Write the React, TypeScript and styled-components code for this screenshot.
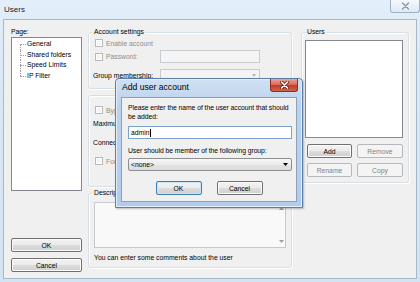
import React from "react";
import styled, { createGlobalStyle } from "styled-components";

const Global = createGlobalStyle`
  html, body { margin: 0; padding: 0; background: #dce9f6; }
  body {
    width: 420px; height: 282px; overflow: hidden;
    font-family: "Liberation Sans", Arial, sans-serif;
    font-size: 6.8px; color: #000;
  }
  * { box-sizing: border-box; }
`;

const Window = styled.div`
  position: relative;
  width: 420px;
  height: 282px;
  display: flex;
  flex-direction: column;
  padding: 0 3px 3px 3px;
  background: linear-gradient(to bottom, #e2effa 0%, #d8e8f6 30%, #d3e3f3 100%);
`;

const TitleBar = styled.div`
  height: 19px;
  display: flex;
  align-items: flex-start;
  justify-content: space-between;
`;

const WindowTitle = styled.div`
  font-size: 8px;
  line-height: 8px;
  margin: 6px 0 0 1px;
  color: #1a1a1a;
`;

const WinClose = styled.div`
  width: 30px;
  height: 13px;
  margin-right: -3px;
  border: 1px solid #9fb0c4;
  border-top: none;
  border-radius: 0 0 3px 3px;
  background: linear-gradient(#f3f8fd, #dde9f5);
  display: flex;
  align-items: center;
  justify-content: center;
`;

const Client = styled.div`
  flex: 1;
  display: flex;
  border: 1px solid #a9b8c9;
  background: #f0f0f0;
  padding: 0 7px;
`;

const LeftPane = styled.div`
  width: 71px;
  display: flex;
  flex-direction: column;
  padding: 7px 0 6px 0;
  margin-right: 6px;
`;

const Label = styled.div`
  line-height: 9px;
  height: 9px;
  white-space: nowrap;
`;

const Tree = styled.div`
  margin-top: 1px;
  height: 154px;
  background: #fff;
  border: 1px solid #828790;
  padding: 1px 0 0 8px;
`;

const TreeItem = styled.div`
  display: flex;
  height: 10.5px;
  align-items: stretch;
  white-space: nowrap;
`;

const Branch = styled.span<{ $first?: boolean; $last?: boolean }>`
  position: relative;
  width: 6px;
  flex: none;
  &::before {
    content: "";
    position: absolute;
    left: 0;
    top: ${(p) => (p.$first ? "50%" : "0")};
    bottom: ${(p) => (p.$last ? "50%" : "0")};
    border-left: 1px dotted #a0a0a0;
  }
  &::after {
    content: "";
    position: absolute;
    left: 0;
    right: 0;
    top: 50%;
    border-top: 1px dotted #a0a0a0;
  }
`;

const TreeText = styled.span`
  line-height: 10.5px;
  padding-left: 1px;
`;

const Btn = styled.div<{ $disabled?: boolean; $default?: boolean }>`
  height: 14px;
  display: flex;
  align-items: center;
  justify-content: center;
  border-radius: 2px;
  border: 1px solid
    ${(p) => (p.$disabled ? "#b5b9bc" : p.$default ? "#3c7fb1" : "#707070")};
  background: ${(p) =>
    p.$disabled
      ? "#f4f4f4"
      : "linear-gradient(#f2f2f2 0%, #ebebeb 50%, #dddddd 51%, #cfcfcf 100%)"};
  box-shadow: ${(p) =>
    p.$default ? "inset 0 0 0 1px #cbe7f7" : p.$disabled ? "none" : "inset 0 0 0 1px #fbfbfb"};
  color: ${(p) => (p.$disabled ? "#838383" : "#000")};
  line-height: 9px;
`;

const LeftButtons = styled.div`
  margin-top: auto;
  display: flex;
  flex-direction: column;
  gap: 6px;
`;

const MiddlePane = styled.div`
  width: 204px;
  display: flex;
  flex-direction: column;
  padding-top: 12px;
  gap: 6px;
  margin-right: 9px;
`;

const RightPane = styled.div`
  width: 108px;
  padding-top: 12px;
`;

const Group = styled.div<{ $h: number }>`
  height: ${(p) => p.$h}px;
  border: 1px solid #d5dfe5;
  border-radius: 3px;
  box-shadow: inset 1px 1px 0 #fff, 1px 1px 0 #fff;
  display: flex;
  flex-direction: column;
`;

const Legend = styled.div`
  align-self: flex-start;
  margin: -6px 0 0 4px;
  padding: 0 1px;
  background: #f0f0f0;
  line-height: 9px;
  height: 9px;
  white-space: nowrap;
`;

const Row = styled.div<{ $mt: number; $h?: number }>`
  display: flex;
  align-items: center;
  margin-top: ${(p) => p.$mt}px;
  height: ${(p) => p.$h ?? 12}px;
  padding-left: 4px;
  white-space: nowrap;
`;

const FieldLabel = styled.div<{ $disabled?: boolean; $w?: number }>`
  width: ${(p) => (p.$w ? `${p.$w}px` : "auto")};
  flex: none;
  color: ${(p) => (p.$disabled ? "#8d8d8d" : "#000")};
  line-height: 9px;
`;

const CheckBox = styled.span<{ $disabled?: boolean }>`
  width: 8px;
  height: 8px;
  flex: none;
  margin: 0 3px 0 2px;
  border: 1px solid ${(p) => (p.$disabled ? "#b9b9b9" : "#8f8f8f")};
  background: ${(p) => (p.$disabled ? "#f4f4f4" : "linear-gradient(#dcdcdc, #fff)")};
  box-shadow: inset 0 0 0 1px #fff;
`;

const DisabledInput = styled.div<{ $w: number }>`
  width: ${(p) => p.$w}px;
  height: 13px;
  border: 1px solid #c9cccf;
  background: #f4f4f4;
`;

const DisabledCombo = styled.div<{ $w: number }>`
  width: ${(p) => p.$w}px;
  height: 13px;
  border: 1px solid #c9cccf;
  background: #f4f4f4;
  display: flex;
  align-items: center;
  justify-content: flex-end;
  padding-right: 3px;
`;

const TextArea = styled.div`
  margin: 5px 5px 0 5px;
  height: 46px;
  border: 1px solid #c7cacd;
  background: #f9f9f9;
  display: flex;
  justify-content: flex-end;
`;

const ScrollBar = styled.div`
  width: 8px;
  display: flex;
  flex-direction: column;
  justify-content: space-between;
  align-items: center;
  padding: 4px 0;
`;

const Hint = styled.div`
  margin: 5px 0 0 5px;
  line-height: 9px;
  white-space: nowrap;
`;

const ListBox = styled.div`
  margin: 4px 0 0 3px;
  width: 98px;
  height: 98px;
  background: #fff;
  border: 1px solid #828790;
`;

const ButtonGrid = styled.div`
  margin: 6px 0 0 5px;
  display: grid;
  grid-template-columns: 45px 46px;
  column-gap: 5px;
  row-gap: 5px;
`;

/* ---------- dialog ---------- */

const Dialog = styled.div`
  position: absolute;
  left: 115px;
  top: 78px;
  width: 188px;
  height: 130px;
  border: 1px solid #5c7ea8;
  border-radius: 4px 4px 0 0;
  background: linear-gradient(to bottom, #cfe0f3 0%, #bcd3ed 20%, #b3cceb 100%);
  box-shadow: 1px 1px 2px rgba(0, 0, 0, 0.25), inset 0 0 0 1px #e4eefa;
  display: flex;
  flex-direction: column;
  padding: 0 5px 5px 5px;
`;

const DialogTitleBar = styled.div`
  height: 18px;
  display: flex;
  justify-content: space-between;
  align-items: flex-start;
`;

const DialogTitle = styled.div`
  font-size: 8.6px;
  line-height: 9px;
  margin: 4px 0 0 1px;
  white-space: nowrap;
`;

const RedClose = styled.div`
  width: 28px;
  height: 13px;
  margin-right: -1px;
  border: 1px solid #8b2d22;
  border-top: none;
  border-radius: 0 0 3px 3px;
  background: linear-gradient(#e9a295 0%, #d9705f 45%, #c23d24 55%, #d0654a 100%);
  display: flex;
  align-items: center;
  justify-content: center;
`;

const DialogClient = styled.div`
  flex: 1;
  border: 1px solid #8ba2bd;
  background: #f0f0f0;
  padding: 5px 4px 0 6px;
  display: flex;
  flex-direction: column;
`;

const Prompt = styled.div<{ $mt?: number }>`
  line-height: 9px;
  margin-top: ${(p) => p.$mt ?? 0}px;
  white-space: nowrap;
  letter-spacing: -0.05px;
`;

const TextInput = styled.div`
  margin-top: 5px;
  height: 13px;
  border: 1px solid #7da2ce;
  background: #fff;
  display: flex;
  align-items: center;
  padding-left: 2px;
  line-height: 9px;
`;

const Caret = styled.span`
  width: 1px;
  height: 8px;
  background: #000;
  margin-left: 0.5px;
`;

const Combo = styled.div`
  margin-top: 3px;
  height: 13px;
  border: 1px solid #8e8f8f;
  border-radius: 2px;
  background: linear-gradient(#f6f6f6 0%, #ececec 50%, #e2e2e2 51%, #dcdcdc 100%);
  display: flex;
  align-items: center;
  justify-content: space-between;
  padding: 0 3px 0 2px;
  line-height: 9px;
`;

const DialogButtons = styled.div`
  margin-top: 10px;
  display: flex;
  justify-content: center;
  gap: 15px;
  padding-right: 2px;
`;

const DlgBtn = styled(Btn)`
  width: 46px;
`;

const Tri = ({ color = "#000", w = 5 }: { color?: string; w?: number }) => (
  <svg width={w} height={3} viewBox="0 0 5 3">
    <path d="M0 0 H5 L2.5 3 Z" fill={color} />
  </svg>
);

const UpTri = () => (
  <svg width={5} height={3} viewBox="0 0 5 3">
    <path d="M0 3 H5 L2.5 0 Z" fill="#a0a0a0" />
  </svg>
);

const XIcon = ({ stroke, outline }: { stroke: string; outline: string }) => (
  <svg width={9} height={8} viewBox="0 0 9 8">
    <path d="M1.5 1 L7.5 7 M7.5 1 L1.5 7" stroke={outline} strokeWidth={3.2} strokeLinecap="round" />
    <path d="M1.5 1 L7.5 7 M7.5 1 L1.5 7" stroke={stroke} strokeWidth={1.6} strokeLinecap="round" />
  </svg>
);

export default function App() {
  return (
    <>
      <Global />
      <Window>
        <TitleBar>
          <WindowTitle>Users</WindowTitle>
          <WinClose>
            <XIcon stroke="#8f9aa6" outline="#f4f7fa" />
          </WinClose>
        </TitleBar>
        <Client>
          <LeftPane>
            <Label>Page:</Label>
            <Tree>
              <TreeItem>
                <Branch $first />
                <TreeText>General</TreeText>
              </TreeItem>
              <TreeItem>
                <Branch />
                <TreeText>Shared folders</TreeText>
              </TreeItem>
              <TreeItem>
                <Branch />
                <TreeText>Speed Limits</TreeText>
              </TreeItem>
              <TreeItem>
                <Branch $last />
                <TreeText>IP Filter</TreeText>
              </TreeItem>
            </Tree>
            <LeftButtons>
              <Btn>OK</Btn>
              <Btn>Cancel</Btn>
            </LeftButtons>
          </LeftPane>

          <MiddlePane>
            <Group $h={57}>
              <Legend>Account settings</Legend>
              <Row $mt={1}>
                <CheckBox $disabled />
                <FieldLabel $disabled>Enable account</FieldLabel>
              </Row>
              <Row $mt={1} $h={13}>
                <CheckBox $disabled />
                <FieldLabel $disabled $w={54}>Password:</FieldLabel>
                <DisabledInput $w={100} />
              </Row>
              <Row $mt={6} $h={13}>
                <FieldLabel $w={67}>Group membership:</FieldLabel>
                <DisabledCombo $w={100}>
                  <Tri color="#a8a8a8" w={4} />
                </DisabledCombo>
              </Row>
            </Group>

            <Group $h={92}>
              <Row $mt={9} $h={10}>
                <CheckBox $disabled />
                <FieldLabel $disabled>Bypass userlimit of server</FieldLabel>
              </Row>
              <Row $mt={1} $h={14}>
                <FieldLabel $w={150}>Maximum connection count:</FieldLabel>
                <DisabledInput $w={40} />
              </Row>
              <Row $mt={5} $h={14}>
                <FieldLabel $w={150}>Connection limit per IP:</FieldLabel>
                <DisabledInput $w={40} />
              </Row>
              <Row $mt={7} $h={10}>
                <CheckBox $disabled />
                <FieldLabel $disabled>Force SSL for user login</FieldLabel>
              </Row>
            </Group>

            <Group $h={75}>
              <Legend>Description</Legend>
              <TextArea>
                <ScrollBar>
                  <UpTri />
                  <Tri color="#a0a0a0" />
                </ScrollBar>
              </TextArea>
              <Hint>You can enter some comments about the user</Hint>
            </Group>
          </MiddlePane>

          <RightPane>
            <Group $h={151}>
              <Legend>Users</Legend>
              <ListBox />
              <ButtonGrid>
                <Btn>Add</Btn>
                <Btn $disabled>Remove</Btn>
                <Btn $disabled>Rename</Btn>
                <Btn $disabled>Copy</Btn>
              </ButtonGrid>
            </Group>
          </RightPane>
        </Client>

        <Dialog>
          <DialogTitleBar>
            <DialogTitle>Add user account</DialogTitle>
            <RedClose>
              <XIcon stroke="#ffffff" outline="#7a2015" />
            </RedClose>
          </DialogTitleBar>
          <DialogClient>
            <Prompt>
              Please enter the name of the user account that should
              <br />
              be added:
            </Prompt>
            <TextInput>
              admin
              <Caret />
            </TextInput>
            <Prompt $mt={7}>User should be member of the following group:</Prompt>
            <Combo>
              <span>&lt;none&gt;</span>
              <Tri />
            </Combo>
            <DialogButtons>
              <DlgBtn $default>OK</DlgBtn>
              <DlgBtn>Cancel</DlgBtn>
            </DialogButtons>
          </DialogClient>
        </Dialog>
      </Window>
    </>
  );
}
